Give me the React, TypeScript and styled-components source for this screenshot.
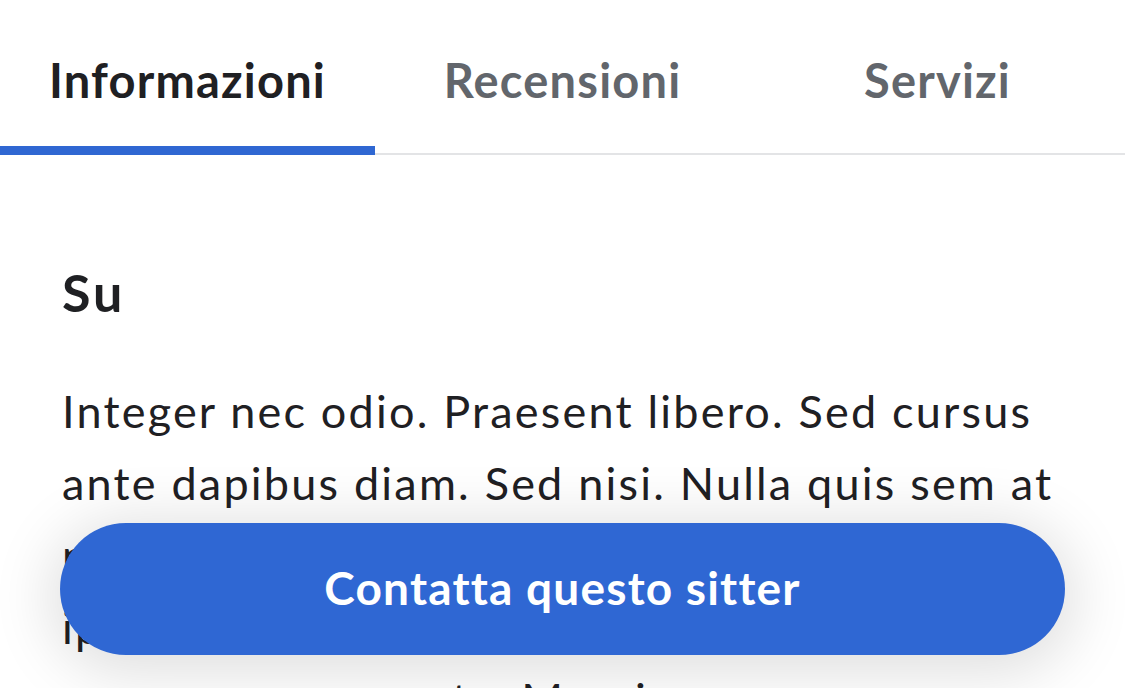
import React from 'react';
import styled, { createGlobalStyle } from 'styled-components';

const Global = createGlobalStyle`
    html, body {
        margin: 0;
        padding: 0;
        background: #ffffff;
        overflow: hidden;
    }

    body {
        font-family: Lato, 'Noto Sans', sans-serif;
        color: #222326;
    }
`;

const tabs = ['Informazioni', 'Recensioni', 'Servizi'];

const App: React.FC = () => {
    return (
        <Page>
            <Global />
            <TabBar>
                {tabs.map((t, i) => (
                    <Tab key={t} active={i === 0}>
                        {t}
                    </Tab>
                ))}
            </TabBar>

            <Content>
                <Heading>Su</Heading>
                <Body>
                    Integer nec odio. Praesent libero. Sed cursus ante dapibus diam. Sed nisi. Nulla quis
                    sem at nibh elementum imperdiet. Duis sagittis ipsum. Praesent mauris. Fusce nec
                    tellus sed augue semper porta. Mauris massa.
                </Body>
            </Content>

            <Footer>
                <ContactButton>Contatta questo sitter</ContactButton>
            </Footer>
        </Page>
    );
};

const Page = styled.div`
    width: 1125px;
    height: 688px;
    position: relative;
    overflow: hidden;
`;

const TabBar = styled.div`
    display: grid;
    grid-template-columns: repeat(3, 1fr);
    border-bottom: 2px solid #e3e4e6;
`;

const Tab = styled.div<{ active?: boolean }>`
    height: 155px;
    padding-top: 52px;
    box-sizing: border-box;
    margin-bottom: -2px;
    text-align: center;
    font-size: 47px;
    font-weight: 700;
    letter-spacing: 1.2px;
    line-height: 56px;
    color: ${(p) => (p.active ? '#1f2023' : '#62666c')};
    border-bottom: 9px solid ${(p) => (p.active ? '#2f67d2' : 'transparent')};
`;

const Content = styled.div`
    padding: 106px 62px 0 62px;
`;

const Heading = styled.h2`
    margin: 0;
    font-size: 52px;
    font-weight: 700;
    letter-spacing: 3px;
    line-height: 62px;
    color: #1f2023;
`;

const Body = styled.p`
    margin: 52px 0 0 0;
    font-size: 45px;
    line-height: 72px;
    letter-spacing: 2.2px;
    color: #1f2023;
`;

const Footer = styled.div`
    position: absolute;
    left: 60px;
    right: 60px;
    bottom: 33px;
    display: flex;
`;

const ContactButton = styled.button`
    flex: 1;
    height: 132px;
    border: none;
    border-radius: 66px;
    background: #2f67d3;
    color: #ffffff;
    font-family: Lato, 'Noto Sans', sans-serif;
    font-size: 46px;
    font-weight: 700;
    letter-spacing: 1.2px;
    padding-bottom: 4px;
    box-shadow: 0 8px 60px 10px rgba(0, 0, 0, 0.13);
    cursor: pointer;
`;

export default App;
